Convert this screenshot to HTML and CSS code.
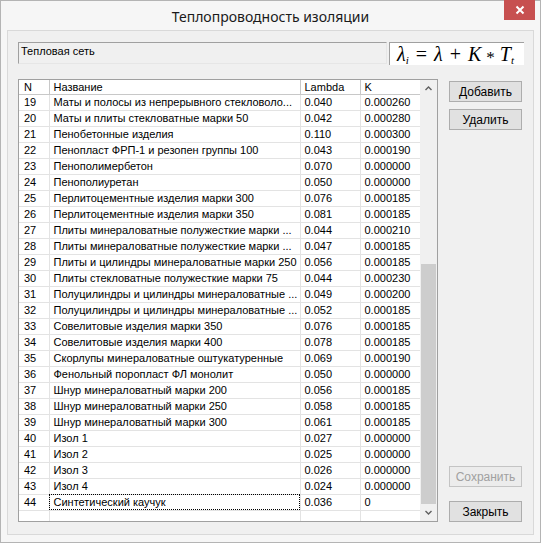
FILE: index.html
```html
<!DOCTYPE html>
<html lang="ru">
<head>
    <meta charset="UTF-8">
    <title>Теплопроводность изоляции</title>
    <link rel="stylesheet" href="styles.css">
</head>
<body>
    <div class="window">
        <div class="titlebar">
            <span class="title">Теплопроводность изоляции</span>
            <div class="close">
                <svg width="10" height="10" viewBox="0 0 10 10"><path d="M1.5 1.5 L8.5 8.5 M8.5 1.5 L1.5 8.5" stroke="#fff" stroke-width="2"/></svg>
            </div>
        </div>
        <div class="client">
            <div class="top-row">
                <div class="net-label">Тепловая сеть</div>
                <div class="formula">
                    <i>λ</i><sub>i</sub><span class="op">=</span><i>λ</i><span class="op">+</span><i>K</i><span class="op star">*</span><i>T</i><sub>t</sub>
                </div>
            </div>
            <div class="main">
                <div class="grid">
                    <div class="grid-body">
                        <table id="materials">
                            <thead>
                                <tr><th class="c-n">N</th><th class="c-name">Название</th><th class="c-l">Lambda</th><th class="c-k">K</th></tr>
                            </thead>
                            <tbody></tbody>
                        </table>
                    </div>
                    <div class="vscroll">
                        <div class="arrow">
                            <svg width="7" height="5" viewBox="0 0 7 5"><path d="M0.5 4 L3.5 1 L6.5 4" fill="none" stroke="#606060" stroke-width="1.4"/></svg>
                        </div>
                        <div class="track"><div class="thumb"></div></div>
                        <div class="arrow">
                            <svg width="7" height="5" viewBox="0 0 7 5"><path d="M0.5 1 L3.5 4 L6.5 1" fill="none" stroke="#606060" stroke-width="1.4"/></svg>
                        </div>
                    </div>
                </div>
                <div class="buttons">
                    <div class="btn-group">
                        <button class="btn">Добавить</button>
                        <button class="btn">Удалить</button>
                    </div>
                    <div class="btn-group bottom">
                        <button class="btn" disabled>Сохранить</button>
                        <button class="btn">Закрыть</button>
                    </div>
                </div>
            </div>
        </div>
    </div>

    <script>
        const rows = [
            [19, 'Маты и полосы из непрерывного стекловоло...', '0.040', '0.000260'],
            [20, 'Маты и плиты стекловатные марки 50', '0.042', '0.000280'],
            [21, 'Пенобетонные изделия', '0.110', '0.000300'],
            [22, 'Пенопласт ФРП-1 и резопен группы 100', '0.043', '0.000190'],
            [23, 'Пенополимербетон', '0.070', '0.000000'],
            [24, 'Пенополиуретан', '0.050', '0.000000'],
            [25, 'Перлитоцементные изделия марки 300', '0.076', '0.000185'],
            [26, 'Перлитоцементные изделия марки 350', '0.081', '0.000185'],
            [27, 'Плиты минераловатные полужесткие марки ...', '0.044', '0.000210'],
            [28, 'Плиты минераловатные полужесткие марки ...', '0.047', '0.000185'],
            [29, 'Плиты и цилиндры минераловатные марки 250', '0.056', '0.000185'],
            [30, 'Плиты стекловатные полужесткие марки 75', '0.044', '0.000230'],
            [31, 'Полуцилиндры и цилиндры минераловатные ...', '0.049', '0.000200'],
            [32, 'Полуцилиндры и цилиндры минераловатные ...', '0.052', '0.000185'],
            [33, 'Совелитовые изделия марки 350', '0.076', '0.000185'],
            [34, 'Совелитовые изделия марки 400', '0.078', '0.000185'],
            [35, 'Скорлупы минераловатные оштукатуренные', '0.069', '0.000190'],
            [36, 'Фенольный поропласт ФЛ монолит', '0.050', '0.000000'],
            [37, 'Шнур минераловатный марки 200', '0.056', '0.000185'],
            [38, 'Шнур минераловатный марки 250', '0.058', '0.000185'],
            [39, 'Шнур минераловатный марки 300', '0.061', '0.000185'],
            [40, 'Изол 1', '0.027', '0.000000'],
            [41, 'Изол 2', '0.025', '0.000000'],
            [42, 'Изол 3', '0.026', '0.000000'],
            [43, 'Изол 4', '0.024', '0.000000'],
            [44, 'Синтетический каучук', '0.036', '0']
        ];

        const tbody = document.querySelector('#materials tbody');
        rows.forEach(r => {
            const tr = document.createElement('tr');
            r.forEach((val, i) => {
                const td = document.createElement('td');
                td.innerText = val;
                if (r[0] === 44 && i === 1) td.className = 'focused';
                tr.appendChild(td);
            });
            tbody.appendChild(tr);
        });
        // empty row at the bottom of the list
        const blank = document.createElement('tr');
        blank.className = 'blank';
        for (let i = 0; i < 4; i++) blank.appendChild(document.createElement('td'));
        tbody.appendChild(blank);
    </script>
</body>
</html>
```

FILE: styles.css
```css
* {
    box-sizing: border-box;
}

body {
    margin: 0;
    font-family: "Liberation Sans", Arial, sans-serif;
    background-color: #ffffff;
}

.window {
    width: 541px;
    height: 543px;
    border: 1px solid #b4b4b4;
    background-color: #f6f6f6;
    padding: 0 6px 7px 6px;
    display: flex;
    flex-direction: column;
}

.titlebar {
    height: 29px;
    position: relative;
    display: flex;
    justify-content: center;
    align-items: center;
}

.title {
    font-family: "Noto Sans", "Open Sans", sans-serif;
    font-size: 14px;
    color: #1a1a1a;
    margin-top: 2px;
}

.close {
    position: absolute;
    top: -1px;
    right: -1px;
    width: 31px;
    height: 20px;
    background-color: #c75050;
    display: flex;
    justify-content: center;
    align-items: center;
}

.client {
    flex: 1;
    border: 1px solid #d9d9d9;
    background-color: #f0f0f0;
    padding: 11px 9px 0 10px;
    font-size: 11px;
}

.top-row {
    display: flex;
    gap: 2px;
    height: 23px;
}

.net-label {
    width: 369px;
    height: 22px;
    border: 1px solid;
    border-color: #a0a0a0 #e6e6e6 #e6e6e6 #a0a0a0;
    padding: 2px 2px;
    line-height: 13px;
    color: #000;
}

.formula {
    width: 135px;
    height: 23px;
    background-color: #fff;
    border-left: 1px solid #a0a0a0;
    border-top: 1px solid #a0a0a0;
    font-family: "Liberation Serif", "Times New Roman", serif;
    font-size: 20px;
    line-height: 22px;
    padding-left: 7px;
    white-space: nowrap;
    color: #000;
}

.formula sub {
    font-size: 11px;
    font-style: italic;
    vertical-align: -3px;
}

.formula .op {
    margin: 0 7px;
}

.formula .star {
    margin: 0 5px;
    font-size: 17px;
    position: relative;
    top: 2px;
}

.main {
    display: flex;
    gap: 11px;
    margin-top: 14px;
}

.grid {
    width: 420px;
    height: 443px;
    border: 1px solid #a0a0a0;
    background-color: #fff;
    display: flex;
    overflow: hidden;
}

.grid-body {
    width: 402px;
    overflow: hidden;
}

table {
    border-collapse: collapse;
    table-layout: fixed;
    width: 402px;
    font-size: 11px;
    color: #000;
}

th, td {
    height: 16px;
    padding: 0 0 0 4px;
    border-right: 1px solid #e3e3e3;
    border-bottom: 1px solid #e3e3e3;
    text-align: left;
    font-weight: normal;
    white-space: nowrap;
    overflow: hidden;
    line-height: 14px;
}

th {
    height: 14px;
    line-height: 12px;
    border-right-color: #c8c8c8;
    border-bottom-color: #c8c8c8;
}

td:first-child, th:first-child {
    padding-left: 5px;
}

.c-n { width: 30px; }
.c-name { width: 251px; }
.c-l { width: 60px; }
.c-k { width: 61px; }

td.focused {
    outline: 1px dotted #000;
    outline-offset: -1px;
}

.vscroll {
    width: 17px;
    background-color: #f0f0f0;
    display: flex;
    flex-direction: column;
}

.arrow {
    height: 17px;
    display: flex;
    justify-content: center;
    align-items: center;
}

.track {
    flex: 1;
}

.thumb {
    margin-top: 167px;
    height: 240px;
    margin-left: 1px;
    width: 15px;
    background-color: #cdcdcd;
}

.buttons {
    width: 73px;
    height: 443px;
    display: flex;
    flex-direction: column;
    justify-content: space-between;
    padding-top: 2px;
}

.btn-group {
    display: flex;
    flex-direction: column;
    gap: 7px;
}

.btn-group.bottom {
    gap: 14px;
}

.btn {
    height: 21px;
    width: 73px;
    background-color: #e1e1e1;
    border: 1px solid #adadad;
    font-family: "Liberation Sans", Arial, sans-serif;
    font-size: 12px;
    color: #000;
    padding: 0;
}

.btn:disabled {
    color: #a0a0a0;
    border-color: #c4c4c4;
    background-color: #ececec;
}
```
